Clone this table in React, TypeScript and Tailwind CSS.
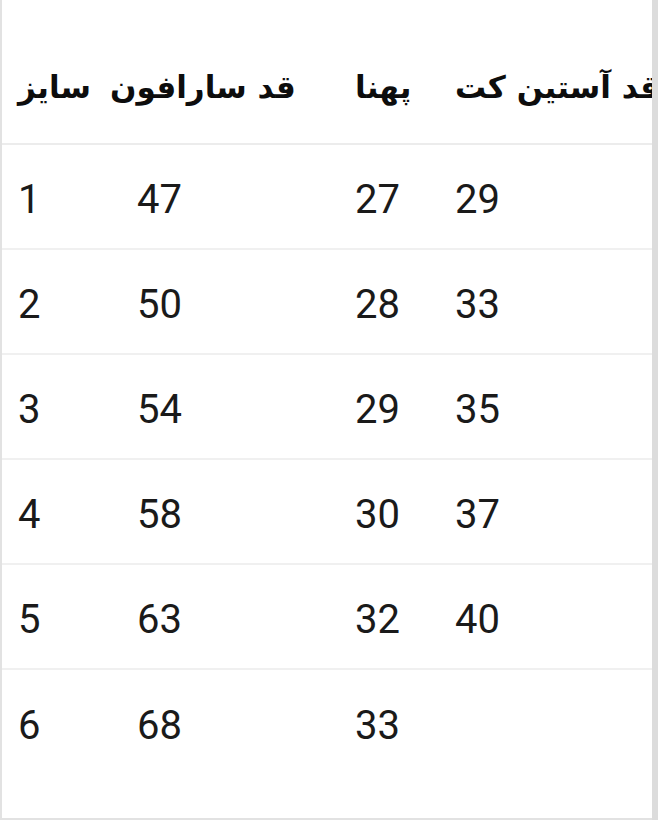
const rows = [
  ["1", "47", "27", "29"],
  ["2", "50", "28", "33"],
  ["3", "54", "29", "35"],
  ["4", "58", "30", "37"],
  ["5", "63", "32", "40"],
  ["6", "68", "33", ""],
];

const cols = "grid grid-cols-[98px_237px_100px_1fr]";

export default function App() {
  return (
    <div className="flex h-[820px] w-[658px] bg-white">
      <div className="flex min-w-0 flex-1 flex-col overflow-hidden border-b-2 border-l-2 border-[#e2e2e2] bg-white">
        <div
          className={`${cols} h-[145px] shrink-0 items-center border-b-2 border-[#ececec] pt-[32px] text-[31px] font-bold text-[#0d0d0d] whitespace-nowrap`}
          style={{ fontFamily: '"DejaVu Sans", sans-serif' }}
        >
          <div dir="rtl" className="pl-4 text-left">سایز</div>
          <div dir="rtl" className="pl-[10px] text-left">قد سارافون</div>
          <div dir="rtl" className="pl-[18px] text-left">پهنا</div>
          <div className="pl-[18px]">
            <span dir="rtl" className="inline-block">قد آستین کت</span>
          </div>
        </div>
        {rows.map((r, i) => (
          <div
            key={i}
            className={`${cols} shrink-0 items-center pt-[6px] text-[40px] text-[#1a1a1a] ${
              i === rows.length - 1 ? "flex-1 pb-[42px]" : "h-[105px] border-b-2 border-[#f0f0f0]"
            }`}
            style={{ fontFamily: "Roboto, sans-serif" }}
          >
            <div className="pl-4">{r[0]}</div>
            <div className="pl-[37px]">{r[1]}</div>
            <div className="pl-[18px]">{r[2]}</div>
            <div className="pl-[18px]">{r[3]}</div>
          </div>
        ))}
      </div>
      <div className="w-[6px] shrink-0 bg-[#dcdcdc]" />
    </div>
  );
}
